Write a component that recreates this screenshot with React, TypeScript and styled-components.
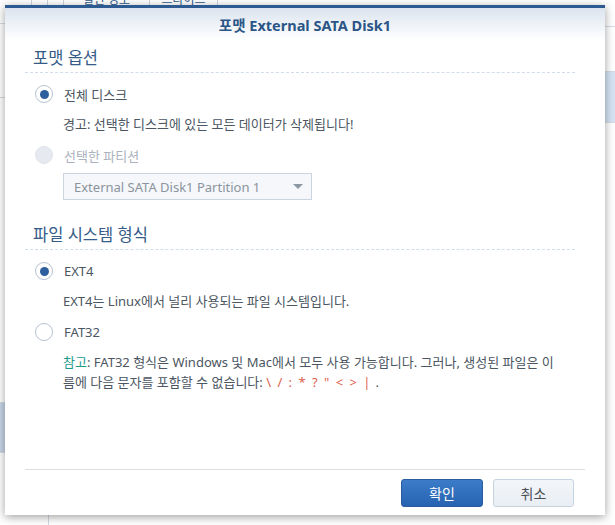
import React from 'react';
import styled, { createGlobalStyle } from 'styled-components';

const GlobalStyle = createGlobalStyle`
  html, body {
    margin: 0;
    padding: 0;
  }
  body {
    font-family: 'Noto Sans', 'Noto Sans CJK KR', sans-serif;
    color: #4b5662;
  }
`;

const Screen = styled.div`
  position: relative;
  width: 615px;
  height: 525px;
  overflow: hidden;
  background: #fff;
`;

/* page behind the dialog */
const Backdrop = styled.div`
  display: flex;
  flex-direction: column;
  height: 100%;
`;

const TabStrip = styled.div`
  display: flex;
  height: 5px;
  overflow: hidden;
`;

const Tab = styled.div<{ $w: number }>`
  width: ${(p) => p.$w}px;
  height: 20px;
  margin-top: -10px;
  border-right: 1px solid #cdd6e0;
  box-sizing: border-box;
  font-size: 12px;
  line-height: 20px;
  text-align: center;
  color: #2d5a8a;
  white-space: nowrap;
`;

const Panes = styled.div`
  display: flex;
  flex: 1;
`;

const LeftPane = styled.div`
  width: 48px;
  display: flex;
  flex-direction: column;
  border-right: 1px solid #d3dae2;
`;

const RightPane = styled.div`
  flex: 1;
  display: flex;
  flex-direction: column;
`;

const PaneRow = styled.div<{ $h: number; $selected?: string }>`
  height: ${(p) => p.$h}px;
  flex-shrink: 0;
  background: ${(p) => p.$selected || 'transparent'};
  border-bottom: 1px solid #d6dce3;
  box-sizing: border-box;
`;

/* dialog */
const Dialog = styled.div`
  position: absolute;
  left: 5px;
  top: 5px;
  width: 600px;
  height: 510px;
  box-sizing: border-box;
  display: flex;
  flex-direction: column;
  background: #fff;
  border-top: 3px solid #2c5a91;
  box-shadow: 0 2px 9px rgba(0, 0, 0, 0.38);
`;

const Header = styled.div`
  height: 32px;
  flex-shrink: 0;
  display: flex;
  align-items: center;
  justify-content: center;
  background: linear-gradient(#dbe4ee, #ffffff);
`;

const Title = styled.h1`
  margin: 0;
  font-size: 14.5px;
  font-weight: 700;
  color: #2b5586;
`;

const Body = styled.div`
  flex: 1;
  padding: 8px 30px 0 20px;
`;

const SectionTitle = styled.h2<{ $first?: boolean }>`
  margin: ${(p) => (p.$first ? 0 : '25px')} 0 0;
  padding: 0 0 4px 8px;
  font-size: 16.5px;
  font-weight: 400;
  line-height: 20px;
  color: #355b87;
  border-bottom: 1px dashed #d2dde9;
`;

const OptionRow = styled.label<{ $disabled?: boolean }>`
  display: flex;
  align-items: center;
  gap: 11px;
  height: 20px;
  margin-top: 11px;
  padding-left: 10px;
  font-size: 13px;
  color: ${(p) => (p.$disabled ? '#aab3bd' : '#4b5662')};
`;

const RadioCircle = styled.span<{ $checked?: boolean; $disabled?: boolean }>`
  position: relative;
  width: 18px;
  height: 18px;
  box-sizing: border-box;
  border-radius: 50%;
  border: 1px solid ${(p) => (p.$disabled ? '#dfe4ea' : '#b7c3d0')};
  background: ${(p) => (p.$disabled ? '#e6eaf0' : '#fff')};

  &::after {
    content: '';
    display: ${(p) => (p.$checked ? 'block' : 'none')};
    position: absolute;
    left: 3.5px;
    top: 3.5px;
    width: 9px;
    height: 9px;
    border-radius: 50%;
    background: #2d5f9f;
  }
`;

const Description = styled.p`
  margin: 10px 0 0;
  padding-left: 38px;
  font-size: 13px;
  line-height: 20px;
  color: #4b5662;
  white-space: nowrap;
`;

const Select = styled.div`
  margin: 8px 0 0 38px;
  width: 249px;
  height: 27px;
  box-sizing: border-box;
  display: flex;
  align-items: center;
  justify-content: space-between;
  padding: 0 8px 0 10px;
  background: #f5f7fa;
  border: 1px solid #cbd5e0;
  font-size: 13px;
  color: #8b949e;
`;

const Caret = styled.span`
  width: 0;
  height: 0;
  border-left: 5px solid transparent;
  border-right: 5px solid transparent;
  border-top: 5px solid #8d98a4;
`;

const NoteLabel = styled.span`
  color: #1d9c8e;
`;

const Forbidden = styled.span`
  color: #e0604c;
  letter-spacing: 1.5px;
`;

const Footer = styled.div`
  flex-shrink: 0;
  margin: 0 20px;
  padding: 9px 11px 8px 0;
  border-top: 1px solid #dedede;
  display: flex;
  justify-content: flex-end;
  gap: 10px;
`;

const Button = styled.button<{ $primary?: boolean }>`
  width: ${(p) => (p.$primary ? 82 : 81)}px;
  height: 28px;
  border-radius: 3px;
  font-family: inherit;
  font-size: 14px;
  cursor: pointer;
  border: 1px solid ${(p) => (p.$primary ? '#2a5c9d' : '#c6d3e1')};
  color: ${(p) => (p.$primary ? '#fff' : '#4a4f55')};
  background: ${(p) =>
    p.$primary
      ? 'linear-gradient(#3c7cc9, #2763b0)'
      : 'linear-gradient(#f3f6f9, #e9eef4)'};
`;

export default function App() {
  return (
    <>
      <GlobalStyle />
      <Screen>
        <Backdrop>
          <TabStrip>
            <Tab $w={32} />
            <Tab $w={16} />
            <Tab $w={16} />
            <Tab $w={86}>일반 정보</Tab>
            <Tab $w={68}>드라이브</Tab>
          </TabStrip>
          <Panes>
            <LeftPane>
              <PaneRow $h={19} />
              <PaneRow $h={74} />
              <PaneRow $h={305} />
              <PaneRow $h={50} $selected="#c8d6e7" />
            </LeftPane>
            <RightPane>
              <PaneRow $h={22} />
              <PaneRow $h={45} />
              <PaneRow $h={51} $selected="#d6e4f4" />
            </RightPane>
          </Panes>
        </Backdrop>

        <Dialog>
          <Header>
            <Title>포맷 External SATA Disk1</Title>
          </Header>
          <Body>
            <SectionTitle $first>포맷 옵션</SectionTitle>
            <OptionRow>
              <RadioCircle $checked />
              전체 디스크
            </OptionRow>
            <Description>경고: 선택한 디스크에 있는 모든 데이터가 삭제됩니다!</Description>
            <OptionRow $disabled>
              <RadioCircle $disabled />
              선택한 파티션
            </OptionRow>
            <Select>
              External SATA Disk1 Partition 1
              <Caret />
            </Select>

            <SectionTitle>파일 시스템 형식</SectionTitle>
            <OptionRow>
              <RadioCircle $checked />
              EXT4
            </OptionRow>
            <Description>EXT4는 Linux에서 널리 사용되는 파일 시스템입니다.</Description>
            <OptionRow>
              <RadioCircle />
              FAT32
            </OptionRow>
            <Description>
              <NoteLabel>참고</NoteLabel>: FAT32 형식은 Windows 및 Mac에서 모두 사용 가능합니다. 그러나, 생성된 파일은 이
              <br />
              름에 다음 문자를 포함할 수 없습니다: <Forbidden>\ / : * ? " &lt; &gt; |</Forbidden> .
            </Description>
          </Body>
          <Footer>
            <Button $primary>확인</Button>
            <Button>취소</Button>
          </Footer>
        </Dialog>
      </Screen>
    </>
  );
}
